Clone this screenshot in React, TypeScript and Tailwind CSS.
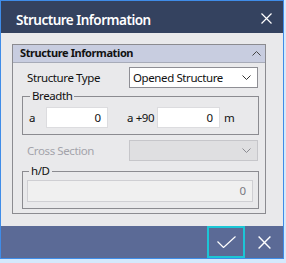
import React from 'react';

const FONT = { fontFamily: '"Noto Sans", "Open Sans", sans-serif' };

function ChevronDown({ color = '#333' }: { color?: string }) {
  return (
    <svg width="9" height="5" viewBox="0 0 9 5" className="block">
      <path d="M0.5 0.5 L4.5 4.5 L8.5 0.5" fill="none" stroke={color} strokeWidth="1" />
    </svg>
  );
}

function ChevronUp() {
  return (
    <svg width="9" height="5" viewBox="0 0 9 5" className="block">
      <path d="M0.5 4.5 L4.5 0.5 L8.5 4.5" fill="none" stroke="#444" strokeWidth="1" />
    </svg>
  );
}

function CloseIcon({ size = 11 }: { size?: number }) {
  return (
    <svg width={size} height={size} viewBox="0 0 11 11" className="block">
      <path d="M0.5 0.5 L10.5 10.5 M10.5 0.5 L0.5 10.5" stroke="#fff" strokeWidth="1.2" fill="none" />
    </svg>
  );
}

export default function App() {
  return (
    <div className="w-[286px] h-[263px] bg-[#d4e9fc]" style={FONT}>
      {/* Window */}
      <div className="w-[284px] h-[259px] border border-[#3f8ce8] flex flex-col bg-[#e9e9eb]">
        {/* Title bar */}
        <div className="h-[32px] bg-[#34425f] flex items-center justify-between pl-[15px] pr-[11px]">
          <span className="mt-[7px] text-white text-[13.5px] font-semibold tracking-[-0.5px]">Structure Information</span>
          <div className="mt-[2px]">
            <CloseIcon />
          </div>
        </div>

        {/* Body */}
        <div className="h-[193px] pl-[11px] pt-[11px]">
          <div className="w-[254px] h-[170px] border border-[#8b8b90] flex flex-col">
            <div className="h-[18px] bg-[#c8cde0] border-b border-[#a7abb8] flex items-center justify-between pl-[7px] pr-[4px]">
              <span className="text-[11px] font-bold tracking-[-0.4px] text-[#111]">Structure Information</span>
              <ChevronUp />
            </div>

            <div className="flex flex-col pl-[9px] pt-[4px]">
              {/* Structure Type */}
              <div className="flex items-center">
                <span className="w-[107px] pl-[5px] text-[11.5px] tracking-[-0.4px] text-[#111]">Structure Type</span>
                <div className="w-[129px] h-[21px] bg-white border border-[#8e8e94] flex items-center justify-between pl-[3px] pr-[6px]">
                  <span className="text-[11.5px] tracking-[-0.4px] text-[#111]">Opened Structure</span>
                  <ChevronDown />
                </div>
              </div>

              {/* Breadth */}
              <fieldset className="w-[237px] mt-[1px] border border-[#8b8b90] pl-[5px] pr-[6px] pt-[4px] pb-[6px]">
                <legend className="ml-[2px] px-[2px] text-[11.5px] leading-[14px] tracking-[-0.4px] text-[#111]">Breadth</legend>
                <div className="flex items-center">
                  <span className="w-[18px] pl-[1px] text-[11.5px] text-[#111]">a</span>
                  <div className="w-[62px] h-[21px] bg-white border border-[#dcdcdf] flex items-center justify-end pr-[6px]">
                    <span className="text-[11.5px] text-[#111]">0</span>
                  </div>
                  <span className="ml-[19px] w-[30px] text-[11.5px] tracking-[-0.4px] text-[#111]">a +90</span>
                  <div className="w-[63px] h-[21px] bg-white border border-[#dcdcdf] flex items-center justify-end pr-[6px]">
                    <span className="text-[11.5px] text-[#111]">0</span>
                  </div>
                  <span className="ml-[4px] text-[11.5px] text-[#111]">m</span>
                </div>
              </fieldset>

              {/* Cross Section */}
              <div className="flex items-center mt-[5px]">
                <span className="w-[107px] pl-[5px] text-[11.5px] tracking-[-0.4px] text-[#a3a3aa]">Cross Section</span>
                <div className="w-[129px] h-[21px] bg-[#dfdfe1] border border-[#c6c6ca] flex items-center justify-end pr-[6px]">
                  <ChevronDown color="#8a8a90" />
                </div>
              </div>

              {/* h/D */}
              <fieldset className="w-[237px] mt-[3px] border border-[#8b8b90] pl-[4px] pr-[5px] pt-[2px] pb-[6px]">
                <legend className="ml-[2px] px-[2px] text-[11.5px] leading-[14px] tracking-[-0.4px] text-[#111]">h/D</legend>
                <div className="w-[226px] h-[22px] bg-[#f0f0f0] border border-[#cfcfd3] flex items-center justify-end pr-[6px]">
                  <span className="text-[11.5px] text-[#7a7a82]">0</span>
                </div>
              </fieldset>
            </div>
          </div>
        </div>

        {/* Footer */}
        <div className="h-[32px] bg-[#5b6a96] flex items-stretch justify-end">
          <button className="w-[38px] border-2 border-[#1cc6d6] flex items-center justify-center">
            <svg width="19" height="12" viewBox="0 0 19 12" className="block">
              <path d="M0.5 5.5 L6.5 11.5 L18.5 0.5" fill="none" stroke="#fff" strokeWidth="1.2" />
            </svg>
          </button>
          <button className="w-[38px] flex items-center justify-center">
            <CloseIcon size={13} />
          </button>
        </div>
      </div>
    </div>
  );
}
